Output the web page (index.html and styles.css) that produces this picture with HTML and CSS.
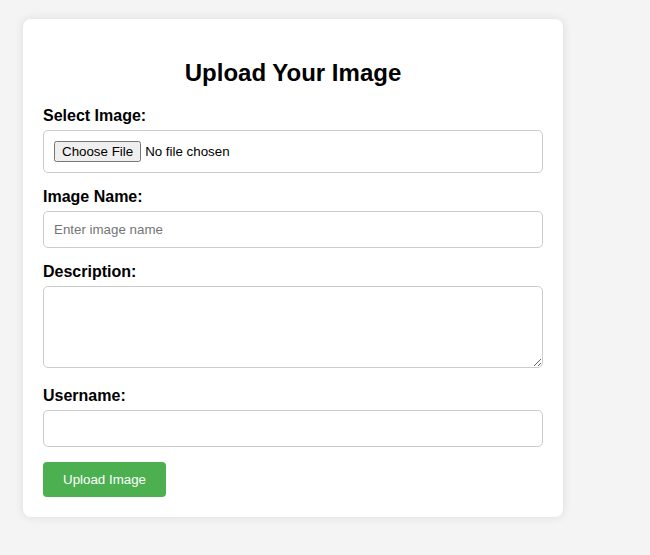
FILE: index.html
```html
<!DOCTYPE html>
<html lang="en">
<head>
<meta charset="UTF-8">
<title>Upload Your Image</title>
<link rel="stylesheet" href="styles.css">
</head>
<body>
<div class="card">
  <h2 class="title">Upload Your Image</h2>
  <form class="form">
    <label class="label" for="file">Select Image:</label>
    <input class="field file" type="file" id="file">
    <label class="label" for="name">Image Name:</label>
    <input class="field" type="text" id="name" placeholder="Enter image name">
    <label class="label" for="desc">Description:</label>
    <textarea class="field area" id="desc"></textarea>
    <label class="label" for="user">Username:</label>
    <input class="field" type="text" id="user">
    <button class="submit" type="button">Upload Image</button>
  </form>
</div>
</body>
</html>
```

FILE: styles.css
```css
html, body {
  margin: 0;
  background: #f4f4f4;
}
body {
  font-family: "Liberation Sans", Arial, sans-serif;
  padding: 19px 23px;
}
.card {
  width: 500px;
  padding: 20px;
  background: #fff;
  border-radius: 8px;
  box-shadow: 0 0 10px rgba(0, 0, 0, 0.1);
}
.title {
  text-align: center;
  font-size: 24px;
  margin: 20px 0;
  color: #000;
}
.form {
  display: flex;
  flex-direction: column;
}
.label {
  display: block;
  font-weight: bold;
  font-size: 16px;
  margin-bottom: 5px;
}
.field {
  box-sizing: border-box;
  width: 100%;
  padding: 10px;
  margin-bottom: 15px;
  border: 1px solid #ccc;
  border-radius: 5px;
  font-family: "Liberation Sans", Arial, sans-serif;
  font-size: 13.33px;
}
.area {
  height: 82px;
  margin-bottom: 19px;
  resize: vertical;
}
.submit {
  align-self: flex-start;
  background: #4caf50;
  color: #fff;
  border: none;
  border-radius: 4px;
  padding: 10px 20px;
  font-family: "Liberation Sans", Arial, sans-serif;
  font-size: 13.33px;
}
```
